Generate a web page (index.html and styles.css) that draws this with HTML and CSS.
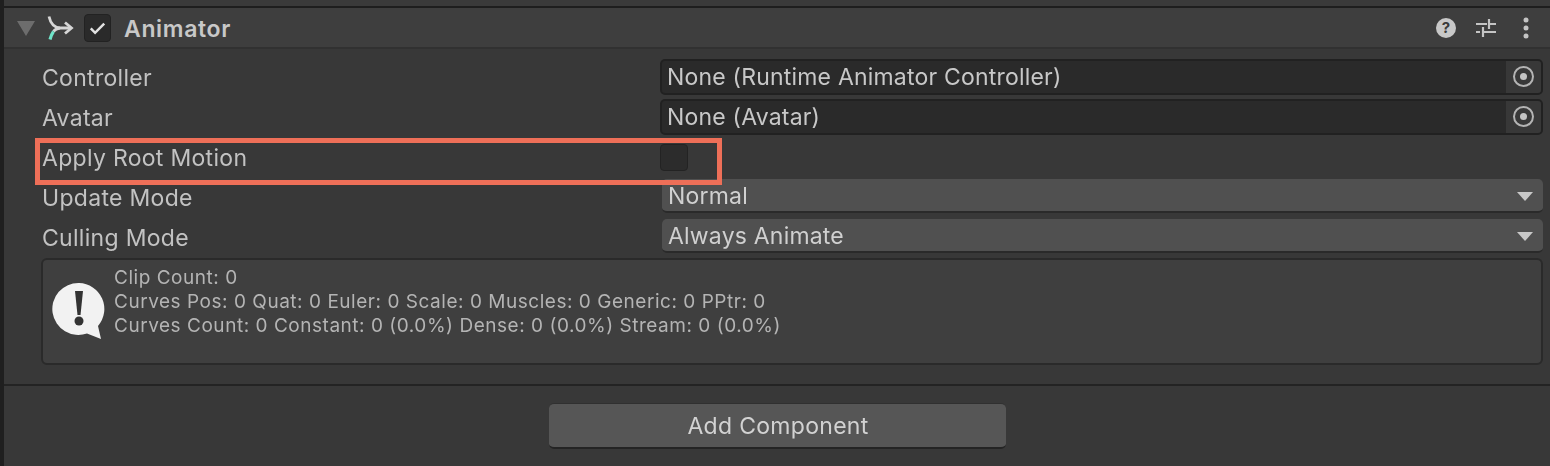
FILE: index.html
```html
<!DOCTYPE html>
<html lang="en">
<head>
<meta charset="utf-8">
<title>Animator</title>
<link rel="stylesheet" href="styles.css">
</head>
<body>
<div class="inspector">
  <div class="top-strip"></div>
  <header class="comp-header">
    <span class="foldout"></span>
    <svg class="animator-icon" width="30" height="30" viewBox="0 0 30 30">
      <path d="M3 3.500 C4.500 10.500 9 14.500 14 15 L25 15" fill="none" stroke="#d6d6d6" stroke-width="2.800"/>
      <path d="M19 9.500 L25.500 15 L19 20.500" fill="none" stroke="#d6d6d6" stroke-width="2.800"/>
      <path d="M14 15 C11 15.500 9 16.500 7.500 18.500" fill="none" stroke="#d6d6d6" stroke-width="2.800"/>
      <path d="M7.500 18.500 C6 20.500 5 23 4 26.500" fill="none" stroke="#6fe3c8" stroke-width="3.200"/>
    </svg>
    <span class="enable-box">
      <svg width="26" height="26" viewBox="0 0 26 26"><path d="M6 13.500 L10.500 18 L20 8.500" fill="none" stroke="#e2e2e2" stroke-width="2.600"/></svg>
    </span>
    <span class="comp-title">Animator</span>
    <span class="header-tools">
      <svg class="tool-help" width="20" height="20" viewBox="0 0 20 20">
        <circle cx="10" cy="10" r="10" fill="#c8c8c8"/>
        <text class="help-mark" x="10" y="15" text-anchor="middle">?</text>
      </svg>
      <svg class="tool-sliders" width="20" height="20" viewBox="0 0 20 20">
        <path d="M0 6 H11 M14 6 H20 M13 1 V11 M0 14 H4 M8 14 H20 M7 9 V19" fill="none" stroke="#c4c4c4" stroke-width="2.200"/>
      </svg>
      <svg class="tool-dots" width="8" height="22" viewBox="0 0 8 22">
        <circle cx="4" cy="3" r="2.500" fill="#c4c4c4"/>
        <circle cx="4" cy="11" r="2.500" fill="#c4c4c4"/>
        <circle cx="4" cy="19" r="2.500" fill="#c4c4c4"/>
      </svg>
    </span>
  </header>

  <section class="props">
    <div class="row">
      <span class="label">Controller</span>
      <div class="object-field">
        <span class="object-text">None (Runtime Animator Controller)</span>
        <span class="picker"><span class="target"></span></span>
      </div>
    </div>
    <div class="row">
      <span class="label">Avatar</span>
      <div class="object-field">
        <span class="object-text">None (Avatar)</span>
        <span class="picker"><span class="target"></span></span>
      </div>
    </div>
    <div class="row">
      <span class="label">Apply Root Motion</span>
      <div class="value"><span class="checkbox"></span></div>
    </div>
    <div class="row">
      <span class="label">Update Mode</span>
      <div class="dropdown"><span>Normal</span><span class="caret"></span></div>
    </div>
    <div class="row">
      <span class="label">Culling Mode</span>
      <div class="dropdown"><span>Always Animate</span><span class="caret"></span></div>
    </div>
    <div class="help-box">
      <svg class="info-icon" width="54" height="58" viewBox="0 0 54 58">
        <path d="M27 1 A26 26 0 1 0 35 51.500 L49 57 L46 44 A26 26 0 0 0 27 1 Z" fill="#f2f2f2"/>
        <path d="M23 9 H31 L28.500 33 H25.500 Z" fill="#333"/>
        <circle cx="27" cy="39" r="4.500" fill="#333"/>
      </svg>
      <div class="help-text">
        <div>Clip Count: 0</div>
        <div>Curves Pos: 0 Quat: 0 Euler: 0 Scale: 0 Muscles: 0 Generic: 0 PPtr: 0</div>
        <div>Curves Count: 0 Constant: 0 (0.0%) Dense: 0 (0.0%) Stream: 0 (0.0%)</div>
      </div>
    </div>
  </section>

  <div class="footer">
    <button class="add-btn" type="button">Add Component</button>
  </div>

  <div class="highlight"></div>
</div>
</body>
</html>
```

FILE: styles.css
```css
* { box-sizing: border-box; }
html, body { margin: 0; padding: 0; height: 466px; overflow: hidden; background: #383838; }
body {
  font-family: Inter, "Liberation Sans", sans-serif;
  color: #c4c4c4;
}
.inspector {
  position: relative;
  width: 1550px;
  height: 466px;
  border-left: 4px solid #1f1f1f;
  display: flex;
  flex-direction: column;
  filter: blur(0.5px);
}
.top-strip {
  height: 8px;
  background: #3a3a3a;
  border-bottom: 2px solid #1e1e1e;
}
.comp-header {
  height: 41px;
  background: #3e3e3e;
  border-bottom: 2px solid #313131;
  display: flex;
  align-items: center;
  padding-left: 13px;
}
.foldout {
  width: 0;
  height: 0;
  border-left: 9px solid transparent;
  border-right: 9px solid transparent;
  border-top: 15px solid #6d6d6d;
  margin-top: 2px;
}
.animator-icon { margin-left: 11px; }
.enable-box {
  width: 27px;
  height: 28px;
  margin-left: 8px;
  background: #2a2a2a;
  border: 1px solid #222;
  border-radius: 4px;
  display: flex;
  align-items: center;
  justify-content: center;
}
.comp-title {
  margin-left: 13px;
  font-size: 23px;
  font-weight: 600;
  letter-spacing: 0.65px;
  color: #c8c8c8;
  padding-top: 3px;
}
.header-tools {
  margin-left: auto;
  display: flex;
  align-items: center;
  padding-right: 20px;
}
.tool-sliders { margin-left: 20px; }
.tool-dots { margin-left: 26px; }
.help-mark {
  font-family: Inter, "Liberation Sans", sans-serif;
  font-size: 15px;
  font-weight: 700;
  fill: #3a3a3a;
}
.props {
  flex: none;
  padding: 8px 7px 0 38px;
  display: flex;
  flex-direction: column;
  height: 337px;
  border-bottom: 2px solid #232323;
}
.row {
  height: 40px;
  display: flex;
  align-items: center;
  flex: none;
}
.label {
  width: 618px;
  flex: none;
  padding-top: 2px;
  font-size: 23px;
  letter-spacing: 0.3px;
  color: #c2c2c2;
}
.object-field {
  flex: 1;
  height: 36px;
  margin-top: -1px;
  display: flex;
  background: #2a2a2a;
  border: 2px solid #212121;
  border-radius: 5px;
  font-size: 23px;
  letter-spacing: 0.2px;
  color: #c8c8c8;
  overflow: hidden;
}
.object-text { flex: 1; padding-left: 5px; line-height: 33px; }
.picker {
  width: 35px;
  background: #383838;
  display: flex;
  align-items: center;
  justify-content: center;
}
.target {
  width: 21px;
  height: 21px;
  border: 2px solid #b4b4b4;
  border-radius: 50%;
  display: flex;
  align-items: center;
  justify-content: center;
}
.target::after {
  content: "";
  width: 7px;
  height: 7px;
  border-radius: 50%;
  background: #c4c4c4;
}
.value { flex: 1; display: flex; }
.checkbox {
  width: 28px;
  height: 27px;
  background: #2c2c2c;
  border: 1px solid #232323;
  border-radius: 4px;
}
.dropdown {
  flex: 1;
  height: 34px;
  margin-left: 2px;
  margin-top: -2px;
  padding: 2px 10px 0 6px;
  background: #505050;
  border-bottom: 2px solid #2a2a2a;
  border-radius: 5px;
  font-size: 23px;
  letter-spacing: 0.2px;
  color: #d0d0d0;
  display: flex;
  align-items: center;
  justify-content: space-between;
}
.caret {
  width: 0;
  height: 0;
  border-left: 8px solid transparent;
  border-right: 8px solid transparent;
  border-top: 9px solid #c8c8c8;
}
.help-box {
  margin-top: 1px;
  height: 107px;
  background: #3f3f3f;
  border: 2px solid #2a2a2a;
  border-radius: 6px;
  margin-left: -1px;
  display: flex;
  align-items: flex-start;
  padding: 6px 0 0 9px;
}
.info-icon { margin-top: 16px; flex: none; }
.help-text {
  margin-left: 8px;
  font-size: 19px;
  letter-spacing: 0.53px;
  line-height: 24px;
  color: #b4b4b4;
  white-space: nowrap;
}
.footer {
  display: flex;
  justify-content: center;
  padding-top: 17px;
}
.add-btn {
  width: 457px;
  height: 46px;
  padding: 0 0 0 2px;
  background: #565656;
  border: none;
  border-bottom: 2px solid #242424;
  border-top: 1px solid #303030;
  border-radius: 5px;
  font-family: inherit;
  font-size: 23px;
  letter-spacing: 0.3px;
  color: #d2d2d2;
}
.highlight {
  position: absolute;
  left: 31px;
  top: 138px;
  width: 687px;
  height: 47px;
  border: 5px solid #ee6f58;
}
```
